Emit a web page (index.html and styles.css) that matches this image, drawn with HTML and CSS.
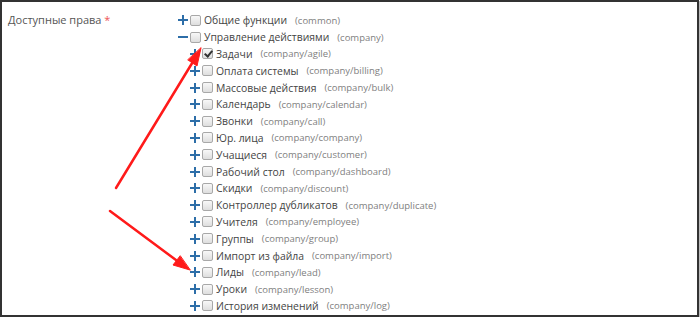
FILE: index.html
```html
<!DOCTYPE html>
<html lang="ru">
<head>
  <meta charset="UTF-8" />
  <title>Доступные права</title>
  <link rel="stylesheet" href="styles.css">
</head>
<body>
  <div class="frame">
    <div class="field">
      <label class="field-label">Доступные права <span class="req">*</span></label>
      <ul class="tree">
        <li class="node"><span class="tog plus"></span><span class="cb"></span><span class="name">Общие функции</span><span class="key">(common)</span></li>
        <li class="node"><span class="tog minus"></span><span class="cb"></span><span class="name">Управление действиями</span><span class="key">(company)</span></li>
        <li class="node sub"><span class="tog plus"></span><span class="cb checked"></span><span class="name">Задачи</span><span class="key">(company/agile)</span></li>
        <li class="node sub"><span class="tog plus"></span><span class="cb"></span><span class="name">Оплата системы</span><span class="key">(company/billing)</span></li>
        <li class="node sub"><span class="tog plus"></span><span class="cb"></span><span class="name">Массовые действия</span><span class="key">(company/bulk)</span></li>
        <li class="node sub"><span class="tog plus"></span><span class="cb"></span><span class="name">Календарь</span><span class="key">(company/calendar)</span></li>
        <li class="node sub"><span class="tog plus"></span><span class="cb"></span><span class="name">Звонки</span><span class="key">(company/call)</span></li>
        <li class="node sub"><span class="tog plus"></span><span class="cb"></span><span class="name">Юр. лица</span><span class="key">(company/company)</span></li>
        <li class="node sub"><span class="tog plus"></span><span class="cb"></span><span class="name">Учащиеся</span><span class="key">(company/customer)</span></li>
        <li class="node sub"><span class="tog plus"></span><span class="cb"></span><span class="name">Рабочий стол</span><span class="key">(company/dashboard)</span></li>
        <li class="node sub"><span class="tog plus"></span><span class="cb"></span><span class="name">Скидки</span><span class="key">(company/discount)</span></li>
        <li class="node sub"><span class="tog plus"></span><span class="cb"></span><span class="name">Контроллер дубликатов</span><span class="key">(company/duplicate)</span></li>
        <li class="node sub"><span class="tog plus"></span><span class="cb"></span><span class="name">Учителя</span><span class="key">(company/employee)</span></li>
        <li class="node sub"><span class="tog plus"></span><span class="cb"></span><span class="name">Группы</span><span class="key">(company/group)</span></li>
        <li class="node sub"><span class="tog plus"></span><span class="cb"></span><span class="name">Импорт из файла</span><span class="key">(company/import)</span></li>
        <li class="node sub"><span class="tog plus"></span><span class="cb"></span><span class="name">Лиды</span><span class="key">(company/lead)</span></li>
        <li class="node sub"><span class="tog plus"></span><span class="cb"></span><span class="name">Уроки</span><span class="key">(company/lesson)</span></li>
        <li class="node sub"><span class="tog plus"></span><span class="cb"></span><span class="name">История изменений</span><span class="key">(company/log)</span></li>
      </ul>
    </div>

    <!-- annotation arrows drawn over the screenshot -->
    <svg class="arrows" width="700" height="318" viewBox="0 0 700 318">
      <g stroke="#ff1a1a" stroke-width="2.5" stroke-linecap="round" fill="#ff1a1a">
        <line x1="116" y1="188" x2="194" y2="60" />
        <polygon points="201,48 197,66 188,60" stroke-width="1" />
        <line x1="110" y1="211" x2="180" y2="263" />
        <polygon points="190,270 173,265 180,256" stroke-width="1" />
      </g>
    </svg>
  </div>
</body>
</html>
```

FILE: styles.css
```css
body {
  margin: 0;
  background: #fff;
  font-family: 'Open Sans', 'Noto Sans', sans-serif;
}
.frame {
  position: relative;
  width: 695px;
  height: 313px;
  border: 2px solid #333;
  box-shadow: 1px 1px 0 #bbb;
  overflow: hidden;
}
.field {
  display: flex;
  padding: 10px 0 0 6px;
}
.field-label {
  width: 170px;
  font-size: 11px;
  line-height: 16.8px;
  color: #555;
}
.req {
  color: #e55;
}
.tree {
  list-style: none;
  margin: 0;
  padding: 0;
}
.node {
  display: flex;
  align-items: center;
  height: 16.8px;
  font-size: 10.4px;
  color: #444;
}
.node.sub {
  padding-left: 12px;
}
.tog {
  position: relative;
  width: 10px;
  height: 10px;
  margin-right: 2px;
}
.tog::before,
.plus::after {
  content: "";
  position: absolute;
  background: #2d6ea8;
}
.tog::before {
  left: 0;
  top: 4px;
  width: 10px;
  height: 2px;
}
.plus::after {
  left: 4px;
  top: 0;
  width: 2px;
  height: 10px;
}
.cb {
  position: relative;
  box-sizing: border-box;
  width: 11px;
  height: 11px;
  border: 1px solid #a8a8a8;
  border-radius: 2px;
  background: linear-gradient(#f8f8f8, #dedede);
  margin-right: 3px;
}
.cb.checked::after {
  content: "";
  position: absolute;
  left: 3px;
  top: 0;
  width: 3px;
  height: 6px;
  border: solid #333;
  border-width: 0 2px 2px 0;
  transform: rotate(40deg);
}
.name {
  white-space: nowrap;
}
.key {
  margin-left: 8px;
  font-size: 9.5px;
  color: #808080;
  white-space: nowrap;
}
.arrows {
  position: absolute;
  left: -2px;
  top: -2px;
}
```
